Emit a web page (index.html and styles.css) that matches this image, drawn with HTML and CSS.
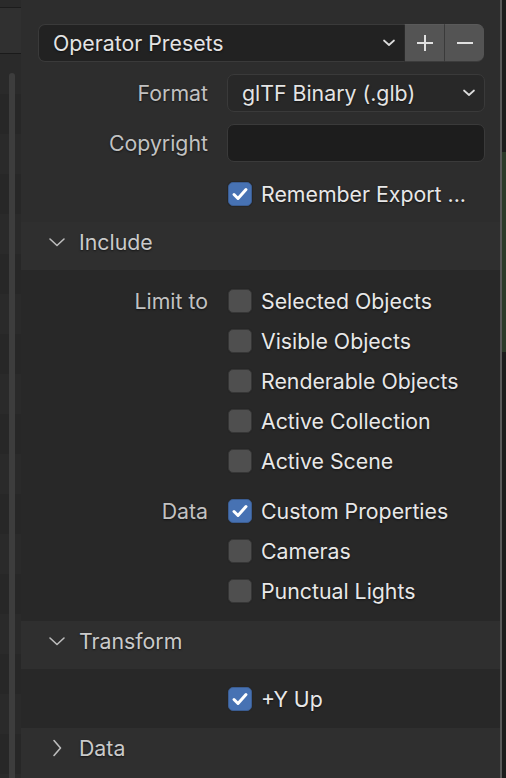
FILE: index.html
```html
<!DOCTYPE html>
<html>
<head>
<meta charset="utf-8">
<link rel="stylesheet" href="styles.css">
</head>
<body>
<div class="strip">
  <div class="strip-top"></div>
  <div class="strip-head"></div>
  <div class="strip-body"><div class="scroll"></div></div>
</div>
<div class="panel">
  <div class="top">
    <div class="preset-row">
      <div class="menu preset"><span>Operator Presets</span>
        <svg class="chev" width="14" height="8" viewBox="0 0 14 8"><polyline points="2,1.5 7,6 12,1.5" /></svg>
      </div>
      <div class="btn plus"><svg width="20" height="20" viewBox="0 0 20 20"><path d="M10 2v16M2 10h16"/></svg></div>
      <div class="btn minus"><svg width="20" height="20" viewBox="0 0 20 20"><path d="M2 10h16"/></svg></div>
    </div>
    <div class="row field-row">
      <div class="lbl">Format</div>
      <div class="menu fmt"><span>glTF Binary (.glb)</span>
        <svg class="chev" width="14" height="8" viewBox="0 0 14 8"><polyline points="2,1.5 7,6 12,1.5" /></svg>
      </div>
    </div>
    <div class="row field-row">
      <div class="lbl">Copyright</div>
      <div class="text-field"></div>
    </div>
    <div class="row check-row">
      <div class="lbl"></div>
      <div class="cb on"><svg width="24" height="24" viewBox="0 0 24 24"><polyline points="6,12.5 10,16.5 18,7.5"/></svg></div>
      <span class="cl">Remember Export ...</span>
    </div>
  </div>

  <div class="head"><svg class="hchev" width="18" height="12" viewBox="0 0 18 12"><polyline points="2,3 9,9.5 16,3"/></svg><span>Include</span></div>
  <div class="body include">
    <div class="row check-row"><div class="lbl">Limit to</div><div class="cb"></div><span class="cl">Selected Objects</span></div>
    <div class="row check-row"><div class="lbl"></div><div class="cb"></div><span class="cl">Visible Objects</span></div>
    <div class="row check-row"><div class="lbl"></div><div class="cb"></div><span class="cl">Renderable Objects</span></div>
    <div class="row check-row"><div class="lbl"></div><div class="cb"></div><span class="cl">Active Collection</span></div>
    <div class="row check-row"><div class="lbl"></div><div class="cb"></div><span class="cl">Active Scene</span></div>
    <div class="row check-row gap"><div class="lbl">Data</div><div class="cb on"><svg width="24" height="24" viewBox="0 0 24 24"><polyline points="6,12.5 10,16.5 18,7.5"/></svg></div><span class="cl">Custom Properties</span></div>
    <div class="row check-row"><div class="lbl"></div><div class="cb"></div><span class="cl">Cameras</span></div>
    <div class="row check-row"><div class="lbl"></div><div class="cb"></div><span class="cl">Punctual Lights</span></div>
  </div>

  <div class="head"><svg class="hchev" width="18" height="12" viewBox="0 0 18 12"><polyline points="2,3 9,9.5 16,3"/></svg><span>Transform</span></div>
  <div class="body transform">
    <div class="row check-row"><div class="lbl"></div><div class="cb on"><svg width="24" height="24" viewBox="0 0 24 24"><polyline points="6,12.5 10,16.5 18,7.5"/></svg></div><span class="cl">+Y Up</span></div>
  </div>

  <div class="head last"><svg class="hchev" width="18" height="18" viewBox="0 0 18 18"><polyline points="6,1.5 12.5,9 6,16.5"/></svg><span>Data</span></div>
</div>
<div class="edge"><div class="green"></div></div>
</body>
</html>
```
FILE: styles.css
```css
html, body {
  margin: 0;
  padding: 0;
}
body {
  width: 506px;
  height: 778px;
  overflow: hidden;
  display: flex;
  background: #2d2d2d;
  font-family: Inter, "Noto Sans", sans-serif;
  font-size: 21.3px;
  color: #e6e6e6;
}

/* left strip */
.strip {
  width: 21px;
  flex: none;
  display: flex;
  flex-direction: column;
  background: #282828;
  overflow: hidden;
}
.strip-top {
  height: 7px;
  background: #2a2a2a;
  border-bottom: 1px solid #1c1c1c;
}
.strip-head {
  height: 45px;
  background: #303030;
  border-bottom: 1px solid #1a1a1a;
}
.strip-body {
  flex: 1;
  display: flex;
  flex-direction: column;
  padding-top: 19px;
  padding-left: 9px;
  background: repeating-linear-gradient(to bottom, #2a2a2a 0 40px, #272727 40px 80px);
}
.scroll {
  width: 6px;
  flex: 1;
  margin-bottom: -10px;
  border-radius: 3px;
  background: #3d3d3d;
}

/* panel */
.panel {
  width: 479px;
  flex: none;
  display: flex;
  flex-direction: column;
  background: #2d2d2d;
}
.top {
  padding: 24px 15px 8px 17px;
}
.preset-row {
  display: flex;
  height: 38px;
  padding-right: 1px;
}
.menu {
  box-sizing: border-box;
  display: flex;
  align-items: center;
  justify-content: space-between;
  height: 38px;
  border: 1px solid #3a3a3a;
  border-radius: 7px;
  color: #e4e4e4;
  text-shadow: 0 1px 2px rgba(0,0,0,.6);
}
.menu span { padding-left: 14px; }
.chev {
  fill: none;
  stroke: #dcdcdc;
  stroke-width: 1.7;
  stroke-linecap: round;
  stroke-linejoin: round;
  margin-right: 8px;
}
.preset {
  flex: 1;
  background: #222222;
  border-radius: 7px 0 0 7px;
  border-right: none;
}
.btn {
  width: 40px;
  height: 38px;
  box-sizing: border-box;
  background: #545454;
  border-top: 1px solid #5a5a5a;
  border-bottom: 1px solid #3c3c3c;
  display: flex;
  align-items: center;
  justify-content: center;
}
.btn svg {
  fill: none;
  stroke: #e0e0e0;
  stroke-width: 2;
}
.plus { border-left: 1px solid #2a2a2a; }
.minus {
  border-left: 1px solid #3a3a3a;
  border-radius: 0 7px 7px 0;
}

.row {
  display: flex;
  align-items: center;
}
.top .lbl { width: 170px; }
.lbl {
  width: 187px;
  flex: none;
  text-align: right;
  margin-right: 19px;
  color: #c2c2c2;
  text-shadow: 0 1px 2px rgba(0,0,0,.6);
}
.field-row {
  margin-top: 12px;
  height: 38px;
}
.fmt {
  flex: 1;
  background: #282828;
}
.text-field {
  flex: 1;
  height: 38px;
  box-sizing: border-box;
  background: #1d1d1d;
  border: 1px solid #3a3a3a;
  border-radius: 7px;
}
.check-row {
  height: 40px;
}
.top .check-row { margin-top: 12px; }
.cb {
  width: 24px;
  height: 24px;
  box-sizing: border-box;
  flex: none;
  margin-left: 1px;
  margin-right: 9px;
  border-radius: 5px;
  background: #4f4f4f;
  border: 1px solid #363636;
  box-shadow: 0 0 0 1px #262626;
}
.cb.on {
  background: #4772b3;
  border-color: #3b5d92;
}
.cb svg {
  display: block;
  margin: -1px;
  fill: none;
  stroke: #ffffff;
  stroke-width: 3;
  stroke-linecap: round;
  stroke-linejoin: round;
}
.cl {
  color: #e8e8e8;
  text-shadow: 0 1px 2px rgba(0,0,0,.6);
}

.head {
  box-sizing: border-box;
  height: 48px;
  display: flex;
  align-items: center;
  padding-left: 27px;
  padding-bottom: 8px;
  background: #2f2f2f;
  color: #cacaca;
  text-shadow: 0 1px 2px rgba(0,0,0,.6);
}
.head.last { flex: 1; height: auto; align-items: flex-start; padding-top: 7px; padding-bottom: 0; }
.hchev {
  fill: none;
  stroke: #bdbdbd;
  stroke-width: 1.6;
  stroke-linecap: round;
  stroke-linejoin: round;
  margin-right: 13px;
}
.head.last .hchev { margin-top: 4px; }
.body {
  background: #282828;
}
.include { padding: 11px 0 10px 0; }
.include .gap { margin-top: 10px; }
.transform { padding: 10px 0 9px 0; }

/* right edge */
.edge {
  width: 4px;
  flex: none;
  border-left: 2px solid #595959;
  background: #1c1c1c;
  padding-top: 152px;
}
.green {
  height: 200px;
  background: #2c3a29;
}
```
